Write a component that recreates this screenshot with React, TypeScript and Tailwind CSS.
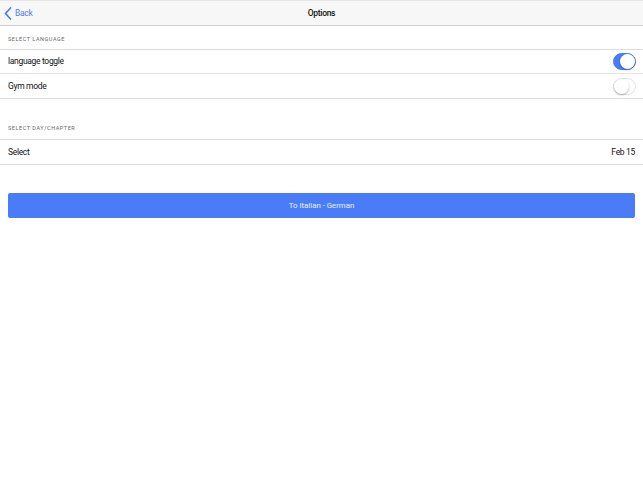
import { useState } from "react";

function Toggle({ on, onClick }: { on: boolean; onClick: () => void }) {
  return (
    <button
      onClick={onClick}
      className={`relative w-[23px] h-[17px] rounded-full border transition ${
        on ? "bg-[#4a7cf7] border-[#4a7cf7]" : "bg-white border-[#e3e3e3]"
      }`}
    >
      <span
        className={`absolute top-[0px] w-[15px] h-[15px] rounded-full bg-white shadow-[0_1px_2px_rgba(0,0,0,0.3)] ${
          on ? "left-[6px]" : "left-[0px]"
        }`}
      />
    </button>
  );
}

export default function App() {
  const [lang, setLang] = useState(true);
  const [gym, setGym] = useState(false);

  return (
    <div className="w-[643px] h-[482px] bg-white font-['Roboto','Liberation_Sans',sans-serif] text-[#111] tracking-[-0.02em]">
      <div className="h-[26px] bg-[#f7f7f7] border-t border-[#e6e6e6] border-b border-b-[#cfcfcf] grid grid-cols-3 items-center">
        <div className="flex items-center pl-[4px] text-[#4a7cf7] text-[8.5px]">
          <svg width="8" height="13" viewBox="0 0 8 13" className="mr-[3px]">
            <path d="M6.5 1 L1.5 6.5 L6.5 12" fill="none" stroke="#4a7cf7" strokeWidth="1.7" strokeLinecap="round" strokeLinejoin="round" />
          </svg>
          Back
        </div>
        <div className="text-center text-[8.5px] font-medium">Options</div>
        <div />
      </div>

      <div className="h-[23px] flex items-end pb-[6px] pl-[8px] text-[5.5px] tracking-[0.1em] text-[#666]">SELECT LANGUAGE</div>
      <div className="border-t border-[#dcdcdc]">
        <div className="h-[24px] flex items-center justify-between pl-[8px] pr-[7px] border-b border-[#e4e4e4] text-[8.5px]">
          <span>language toggle</span>
          <Toggle on={lang} onClick={() => setLang(!lang)} />
        </div>
        <div className="h-[25px] flex items-center justify-between pl-[8px] pr-[7px] border-b border-[#dcdcdc] text-[8.5px]">
          <span>Gym mode</span>
          <Toggle on={gym} onClick={() => setGym(!gym)} />
        </div>
      </div>

      <div className="h-[40px] flex items-end pb-[7px] pl-[8px] text-[5.5px] tracking-[0.1em] text-[#666]">SELECT DAY/CHAPTER</div>
      <div className="h-[26px] flex items-center justify-between pl-[8px] pr-[8px] border-t border-b border-[#dcdcdc] text-[8.5px]">
        <span>Select</span>
        <span>Feb 15</span>
      </div>

      <div className="px-[8px] pt-[26px]">
        <button className="w-full h-[25px] rounded-[2px] bg-[#4a7cf8] text-white/90 text-[7.8px] tracking-normal">To Italian - German</button>
      </div>
    </div>
  );
}
